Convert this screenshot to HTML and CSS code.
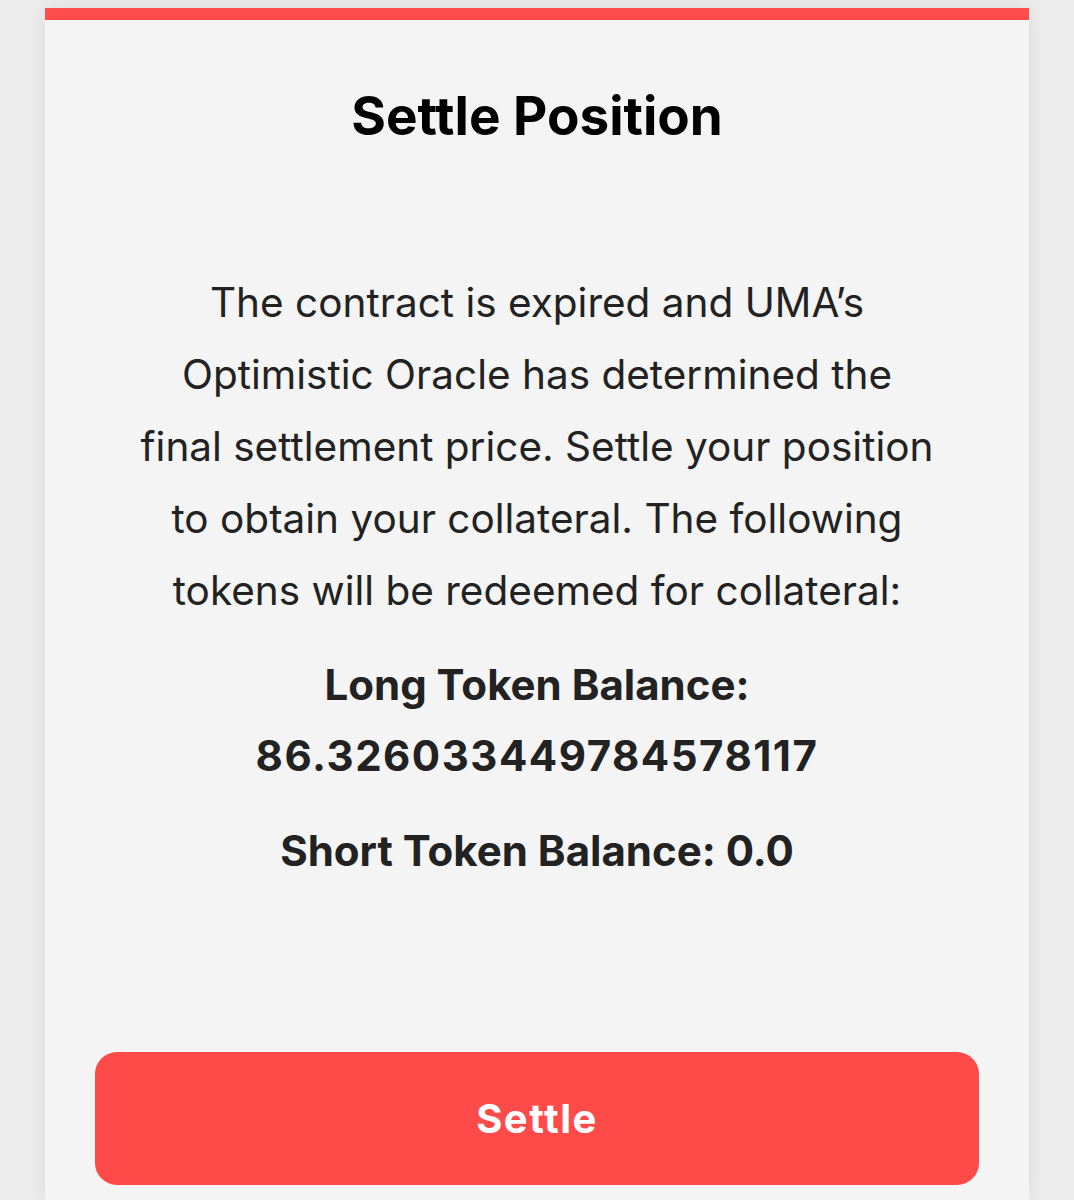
FILE: index.html
```html
<!DOCTYPE html>
<html>

<head>
  <title>Settle Position</title>
  <link rel="stylesheet" href="styles.css">
</head>

<body>
  <div class="page">
    <div class="card">
      <h1 class="title">Settle Position</h1>

      <p class="info">
        The contract is expired and UMA’s Optimistic Oracle has determined the
        final settlement price. Settle your position to obtain your collateral.
        The following tokens will be redeemed for collateral:
      </p>

      <p class="balance">Long Token Balance: <span class="amount">86.326033449784578117</span></p>
      <p class="balance">Short Token Balance: 0.0</p>

      <button class="settle-btn">Settle</button>
    </div>
  </div>
</body>

</html>
```

FILE: styles.css
```css
body {
  margin: 0;
  font-family: Inter, 'Liberation Sans', sans-serif;
  background-color: #ececec;
}

.page {
  padding: 8px 45px 0;
}

.card {
  box-sizing: border-box;
  min-height: 1192px;
  padding: 0 50px;
  background-color: #f4f4f4;
  border-top: 12px solid #ff4d4d;
  box-shadow: 0 0 18px rgba(0, 0, 0, 0.08);
  display: flex;
  flex-direction: column;
  align-items: center;
  text-align: center;
}

.title {
  margin: 65px 0 0;
  font-size: 53px;
  line-height: 62px;
  font-weight: 700;
  color: #000;
}

.info {
  margin: 120px 0 0;
  max-width: 795px;
  font-size: 40.5px;
  line-height: 72px;
  color: #222;
}

.balance {
  margin: 22px 0 0;
  max-width: 600px;
  font-size: 42px;
  line-height: 71px;
  font-weight: 700;
  color: #222;
}

.balance + .balance {
  margin-top: 24px;
}

.amount {
  letter-spacing: 1.5px;
}

.settle-btn {
  margin-top: 166px;
  width: 100%;
  height: 133px;
  font-family: inherit;
  font-size: 40px;
  font-weight: 700;
  letter-spacing: 1.5px;
  color: #fff;
  background-color: #ff4a4a;
  border: none;
  border-radius: 22px;
  cursor: pointer;
}
```
